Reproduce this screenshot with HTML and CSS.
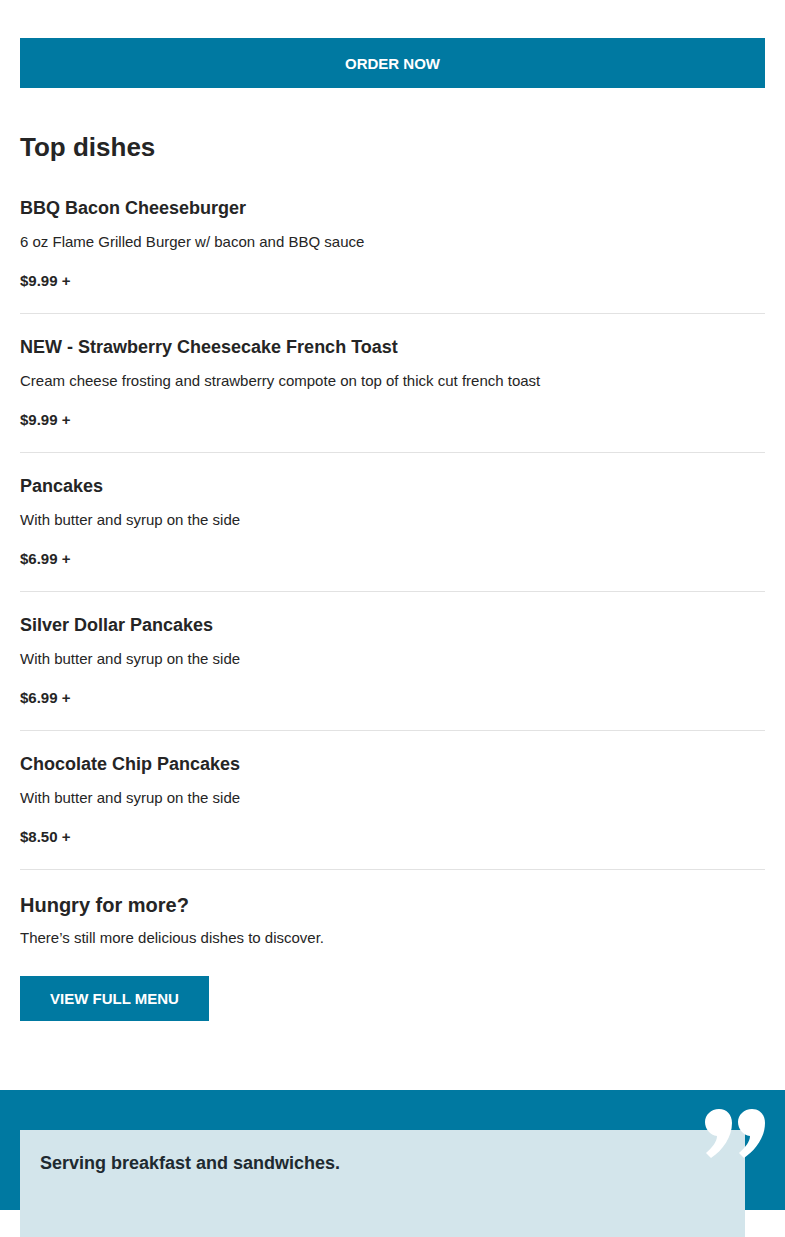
FILE: index.html
```html
<!DOCTYPE html>
<html lang="en">
<head>
<meta charset="utf-8">
<title>Top dishes</title>
<link rel="stylesheet" href="styles.css">
</head>
<body>
<main class="page">
  <div class="order-wrap">
    <a class="btn btn-block" href="#">ORDER NOW</a>
  </div>

  <section class="dishes">
    <h2 class="section-title">Top dishes</h2>
    <ul class="dish-list">
      <li class="dish">
        <h3 class="dish-name">BBQ Bacon Cheeseburger</h3>
        <p class="dish-desc">6 oz Flame Grilled Burger w/ bacon and BBQ sauce</p>
        <p class="dish-price">$9.99 +</p>
      </li>
      <li class="dish">
        <h3 class="dish-name">NEW - Strawberry Cheesecake French Toast</h3>
        <p class="dish-desc">Cream cheese frosting and strawberry compote on top of thick cut french toast</p>
        <p class="dish-price">$9.99 +</p>
      </li>
      <li class="dish">
        <h3 class="dish-name">Pancakes</h3>
        <p class="dish-desc">With butter and syrup on the side</p>
        <p class="dish-price">$6.99 +</p>
      </li>
      <li class="dish">
        <h3 class="dish-name">Silver Dollar Pancakes</h3>
        <p class="dish-desc">With butter and syrup on the side</p>
        <p class="dish-price">$6.99 +</p>
      </li>
      <li class="dish">
        <h3 class="dish-name">Chocolate Chip Pancakes</h3>
        <p class="dish-desc">With butter and syrup on the side</p>
        <p class="dish-price">$8.50 +</p>
      </li>
    </ul>
  </section>

  <section class="more">
    <h3 class="more-title">Hungry for more?</h3>
    <p class="more-text">There’s still more delicious dishes to discover.</p>
    <a class="btn btn-inline" href="#">VIEW FULL MENU</a>
  </section>

  <section class="quote-band">
    <svg class="quote-icon" viewBox="0 0 60 50" aria-hidden="true">
      <path d="M14 0 C22 0 27 6 27 14 C27 28 18 41 6 49 L1 44 C8 38 12 32 12 27 C5 26 0 20 0 13 C0 6 6 0 14 0 Z" fill="#fff"/>
      <path d="M47 0 C55 0 60 6 60 14 C60 28 51 41 39 49 L34 44 C41 38 45 32 45 27 C38 26 33 20 33 13 C33 6 39 0 47 0 Z" fill="#fff"/>
    </svg>
    <div class="quote-box">
      <p class="quote-text">Serving breakfast and sandwiches.</p>
    </div>
  </section>
</main>
</body>
</html>
```

FILE: styles.css
```css
* { box-sizing: border-box; }

html, body {
  margin: 0;
  padding: 0;
  background: #fff;
}

body {
  font-family: "Liberation Sans", Arial, sans-serif;
  color: #252525;
}

.page {
  display: flex;
  flex-direction: column;
}

.order-wrap {
  padding: 38px 20px 0;
}

.btn {
  display: flex;
  align-items: center;
  justify-content: center;
  background: #0079a1;
  color: #fff;
  font-weight: bold;
  font-size: 15px;
  text-decoration: none;
}

.btn-block {
  height: 50px;
  width: 100%;
}

.btn-inline {
  align-self: flex-start;
  height: 45px;
  padding: 0 30px;
  margin-top: 28px;
}

.dishes {
  padding: 0 20px;
}

.section-title {
  margin: 42px 0 0;
  font-size: 26px;
  line-height: 34px;
  font-weight: bold;
}

.dish-list {
  list-style: none;
  margin: 0;
  padding: 0;
}

.dish {
  padding: 21px 0 22px;
  border-bottom: 1px solid #e2e2e2;
}

.dish:first-child {
  padding-top: 32px;
}

.dish-name {
  margin: 0;
  font-size: 18px;
  line-height: 24px;
  font-weight: bold;
}

.dish-desc {
  margin: 12px 0 0;
  font-size: 15px;
  line-height: 20px;
}

.dish-price {
  margin: 19px 0 0;
  font-size: 15px;
  line-height: 20px;
  font-weight: bold;
}

.more {
  display: flex;
  flex-direction: column;
  padding: 0 20px;
}

.more-title {
  margin: 22px 0 0;
  font-size: 20px;
  line-height: 26px;
  font-weight: bold;
}

.more-text {
  margin: 10px 0 0;
  font-size: 15px;
  line-height: 20px;
}

.quote-band {
  position: relative;
  margin-top: 69px;
  padding: 40px 40px 0 20px;
  background: linear-gradient(#0079a1 0, #0079a1 120px, #fff 120px);
}

.quote-icon {
  position: absolute;
  top: 19px;
  right: 20px;
  width: 60px;
  height: 50px;
}

.quote-box {
  background: #d3e5eb;
  padding: 20px;
  height: 200px;
}

.quote-text {
  margin: 0;
  font-size: 18px;
  line-height: 26px;
  font-weight: bold;
  color: #1e2a30;
}
```
